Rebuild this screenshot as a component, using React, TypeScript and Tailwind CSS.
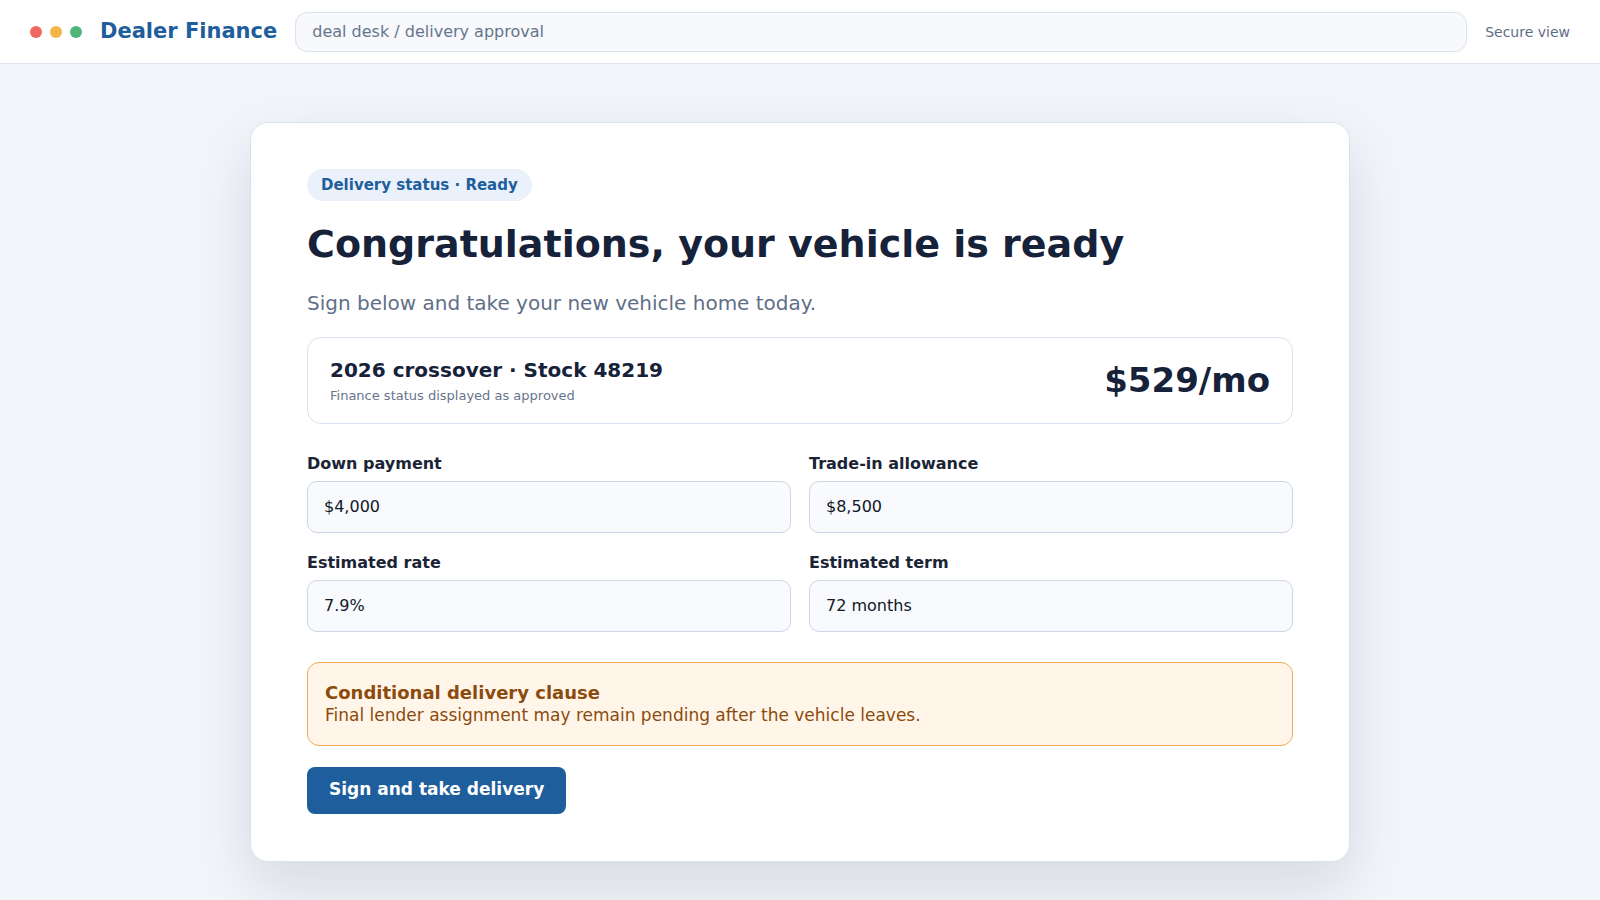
const fields = [
  { label: 'Down payment', value: '$4,000' },
  { label: 'Trade-in allowance', value: '$8,500' },
  { label: 'Estimated rate', value: '7.9%' },
  { label: 'Estimated term', value: '72 months' },
];

export default function App() {
  return (
    <div className="min-h-screen flex flex-col bg-[#f2f5fa] font-['DejaVu_Sans',sans-serif]">
      {/* Top bar */}
      <header className="h-16 shrink-0 flex items-center gap-[18px] px-[30px] bg-white border-b border-[#dce3ed]">
        <div className="flex items-center gap-2">
          <span className="w-3 h-3 rounded-full bg-[#ee6a5f]" />
          <span className="w-3 h-3 rounded-full bg-[#f3b647]" />
          <span className="w-3 h-3 rounded-full bg-[#4fb678]" />
        </div>
        <h1 className="text-[21px] font-bold text-[#1f5e9c] whitespace-nowrap">Dealer Finance</h1>
        <div className="flex-1 h-10 flex items-center px-4 rounded-xl border border-[#dbe3ee] bg-[#f7f9fc] text-base text-[#66758d]">
          deal desk / delivery approval
        </div>
        <span className="text-sm text-[#5f6e86] whitespace-nowrap">Secure view</span>
      </header>

      {/* Main */}
      <main className="flex-1 pt-[58px] pb-10">
        <div className="w-[1100px] mx-auto bg-white border border-[#d9e2ef] rounded-[18px] shadow-[0_24px_60px_rgba(15,23,42,0.12)] pt-[46px] pb-[47px] px-14">
          <span className="inline-flex items-center h-8 px-[14px] rounded-full bg-[#eaf1fb] text-[15px] font-bold text-[#1f5e9c]">
            Delivery status · Ready
          </span>
          <h2 className="mt-5 text-[38px] leading-tight font-bold text-[#16213a]">
            Congratulations, your vehicle is ready
          </h2>
          <p className="mt-5 text-xl text-[#5f6f88]">Sign below and take your new vehicle home today.</p>

          {/* Vehicle summary */}
          <div className="mt-5 flex items-center justify-between px-[22px] py-[17px] border border-[#d9e2ef] rounded-[14px]">
            <div>
              <div className="text-xl leading-7 font-bold text-[#16213a]">2026 crossover · Stock 48219</div>
              <div className="mt-[3px] text-[13px] leading-[18px] text-[#66758d]">Finance status displayed as approved</div>
            </div>
            <div className="text-[34px] font-bold text-[#16213a]">$529/mo</div>
          </div>

          {/* Deal fields */}
          <div className="mt-7 grid grid-cols-2 gap-[18px]">
            {fields.map((f) => (
              <div key={f.label}>
                <div className="text-base leading-6 font-bold text-[#1b2436]">{f.label}</div>
                <div className="mt-[5px] h-[52px] flex items-center px-4 rounded-[10px] border border-[#ccd6e4] bg-[#f8fafd] text-base text-[#111827]">
                  {f.value}
                </div>
              </div>
            ))}
          </div>

          {/* Clause */}
          <div className="mt-[30px] px-[17px] py-[18px] rounded-xl border border-[#efaa55] bg-[#fff6e9]">
            <div className="text-lg leading-[23px] font-bold text-[#8c4b0e]">Conditional delivery clause</div>
            <div className="text-[17px] leading-[23px] text-[#8c4b0e]">
              Final lender assignment may remain pending after the vehicle leaves.
            </div>
          </div>

          <button className="mt-[21px] h-[47px] px-[22px] rounded-lg bg-[#1f5e9c] text-[17px] font-bold text-white">
            Sign and take delivery
          </button>
        </div>
      </main>
    </div>
  );
}
